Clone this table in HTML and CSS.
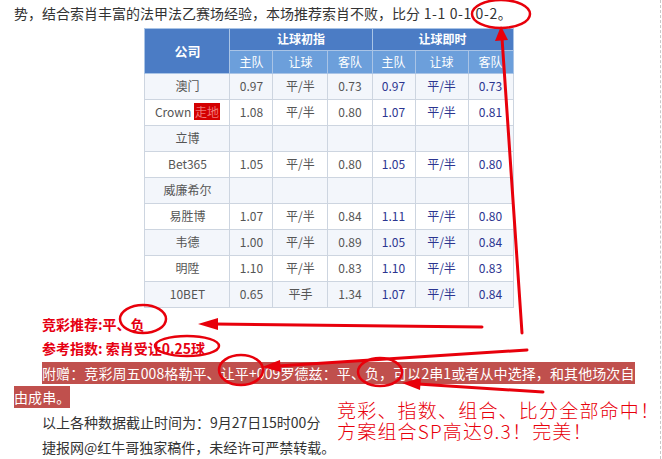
FILE: index.html
```html
<!DOCTYPE html>
<html lang="zh-CN">
<head>
<meta charset="utf-8">
<link rel="stylesheet" href="styles.css">
</head>
<body>
<div class="page">
  <div class="content">
    <p class="first">势，结合索肖丰富的法甲法乙赛场经验，本场推荐索肖不败，比分<span class="sc"> 1-1 0-1 0-2。</span></p>
    <table class="odds">
      <colgroup>
        <col class="w-co"><col class="w-a"><col class="w-b"><col class="w-c"><col class="w-d"><col class="w-e"><col class="w-f">
      </colgroup>
      <thead>
        <tr class="h1">
          <th rowspan="2" class="co">公司</th>
          <th colspan="3">让球初指</th>
          <th colspan="3">让球即时</th>
        </tr>
        <tr class="h2">
          <th>主队</th><th>让球</th><th>客队</th>
          <th>主队</th><th>让球</th><th>客队</th>
        </tr>
      </thead>
      <tbody>
        <tr class="alt"><td>澳门</td><td>0.97</td><td>平/半</td><td>0.73</td><td class="n">0.97</td><td class="n">平/半</td><td class="n">0.73</td></tr>
        <tr><td>Crown <span class="live">走地</span></td><td>1.08</td><td>平/半</td><td>0.80</td><td class="n">1.07</td><td class="n">平/半</td><td class="n">0.81</td></tr>
        <tr class="alt"><td>立博</td><td></td><td></td><td></td><td></td><td></td><td></td></tr>
        <tr><td>Bet365</td><td>1.05</td><td>平/半</td><td>0.80</td><td class="n">1.05</td><td class="n">平/半</td><td class="n">0.80</td></tr>
        <tr class="alt"><td>威廉希尔</td><td></td><td></td><td></td><td></td><td></td><td></td></tr>
        <tr><td>易胜博</td><td>1.07</td><td>平/半</td><td>0.84</td><td class="n">1.11</td><td class="n">平/半</td><td class="n">0.80</td></tr>
        <tr class="alt"><td>韦德</td><td>1.00</td><td>平/半</td><td>0.89</td><td class="n">1.05</td><td class="n">平/半</td><td class="n">0.84</td></tr>
        <tr><td>明陞</td><td>1.10</td><td>平/半</td><td>0.83</td><td class="n">1.10</td><td class="n">平/半</td><td class="n">0.83</td></tr>
        <tr class="alt"><td>10BET</td><td>0.65</td><td>平手</td><td>1.34</td><td class="n">1.07</td><td class="n">平/半</td><td class="n">0.84</td></tr>
      </tbody>
    </table>
    <p class="ind red after-table">竞彩推荐:平、负</p>
    <p class="ind red">参考指数: 索肖受让0.25球</p>
    <p class="ind"><span class="hl">附赠：竞彩周五008格勒平、让平+009罗德兹：平、负，可以2串1或者从中选择，和其他场次自<br>由成串。</span></p>
    <p class="ind">以上各种数据截止时间为：9月27日15时00分</p>
    <p class="ind">捷报网@红牛哥独家稿件，未经许可严禁转载。</p>
  </div>

  <div class="note">竞彩、指数、组合、比分全部命中！<br>方案组合SP高达9.3！完美！</div>

  <svg class="marks" width="662" height="459" viewBox="0 0 662 459" xmlns="http://www.w3.org/2000/svg">
    <g fill="none" stroke="#e8000b" stroke-width="2.5">
      <ellipse cx="501" cy="14" rx="29" ry="14"/>
      <ellipse cx="143" cy="319" rx="23" ry="14"/>
      <ellipse cx="187" cy="346" rx="32" ry="10"/>
      <ellipse cx="241" cy="370" rx="22" ry="15"/>
      <ellipse cx="380" cy="372" rx="22" ry="14"/>
    </g>
    <g stroke="#e8000b" stroke-width="3" stroke-linecap="round">
      <line x1="522" y1="333" x2="502" y2="38"/>
      <line x1="482" y1="327" x2="214" y2="324"/>
      <line x1="527" y1="350" x2="278" y2="366"/>
      <line x1="543" y1="392" x2="418" y2="384"/>
    </g>
    <g fill="#e8000b">
      <polygon points="501,26 495,41 508,40"/>
      <polygon points="198,324 218,318 218,330"/>
      <polygon points="262,367 281,372 280,360"/>
      <polygon points="402,383 420,390 421,378"/>
    </g>
  </svg>
</div>
</body>
</html>
```

FILE: styles.css
```css
* { box-sizing: border-box; }
html, body { margin: 0; padding: 0; background: #fff; }
body {
  font-family: "Noto Sans CJK SC", "Noto Sans", sans-serif;
  color: #333;
}
.page {
  position: relative;
  width: 661px;
  height: 459px;
  overflow: hidden;
  border-right: 1px dashed #c8c8c8;
}
.content {
  width: 630px;
  margin-left: 14px;
  font-size: 14px;
  line-height: 24.6px;
}
.content p { margin: 0; }
.first { padding-top: 1px; }
.sc { letter-spacing: 0.6px; }
.ind { text-indent: 2em; }
.red { color: #e60012; font-weight: bold; }
.after-table { margin-top: 4px !important; }
.hl {
  background: #c0504d;
  color: #fff;
  padding: 1px 0;
  letter-spacing: 0.1px;
}

.odds {
  margin: 2px auto 0;
  width: 368px;
  table-layout: fixed;
  border-collapse: collapse;
  font-size: 12px;
  line-height: 16px;
  text-align: center;
}
.w-co { width: 85px; }
.w-a { width: 43px; }
.w-b { width: 55px; }
.w-c { width: 44px; }
.w-d { width: 43px; }
.w-e { width: 53px; }
.w-f { width: 45px; }

.odds th {
  color: #fff;
  font-weight: bold;
  font-size: 12px;
  padding: 0;
  border: 1px solid #a9c4e6;
}
.odds .h1 { height: 22px; }
.odds .h1 th { background: #4b7cc5; }
.odds .h2 { height: 23px; }
.odds .h2 th { background: #6c9fdb; font-weight: normal; }
.odds th.co { background: #4b7cc5; font-size: 13px; }

.odds td {
  border: 1px solid #cdd5e0;
  color: #555;
  padding: 0;
  white-space: nowrap;
}
.odds tbody tr { height: 26px; background: #fff; }
.odds tbody tr.alt { background: #f3f6fb; }
.odds td.n { color: #2b3590; }
.live {
  background: #d40000;
  color: #f07878;
  padding: 0 1px;
}

.note {
  position: absolute;
  left: 337px;
  top: 399px;
  white-space: nowrap;
  font-family: "Noto Sans CJK SC", sans-serif;
  font-size: 19px;
  line-height: 21px;
  letter-spacing: 1.2px;
  color: #e8000b;
  font-weight: 300;
}
.marks {
  position: absolute;
  left: 0;
  top: 0;
  pointer-events: none;
}
```
